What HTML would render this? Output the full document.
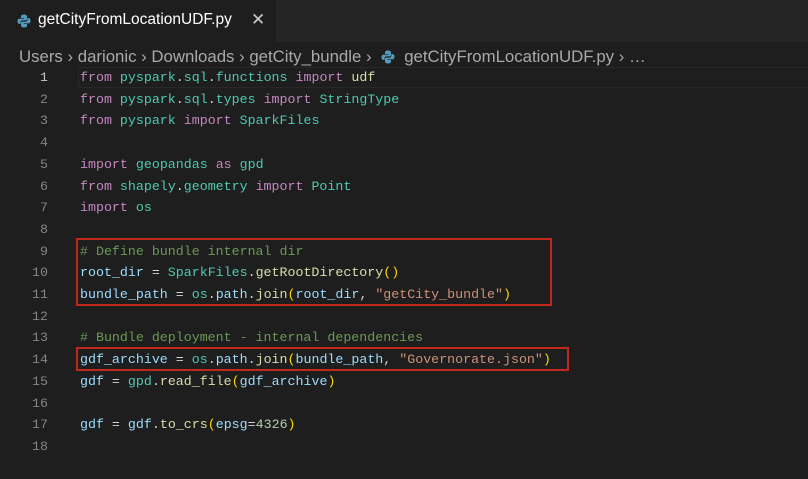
<!DOCTYPE html>
<html><head><style>
body{margin:0;width:808px;height:456px;background:#1e1e1e;overflow:hidden;position:relative;font-family:"Liberation Sans",sans-serif}
.tabbar{position:absolute;left:0;top:0;width:808px;height:42px;background:#252526}
.tab{position:absolute;left:0;top:0;width:276px;height:42px;background:#1e1e1e}
.tab .t{position:absolute;left:38px;top:11px;font-size:15.5px;color:#fff}
.tab .x{position:absolute;left:251px;top:10px;font-size:17px;color:#ccc}
.bc{position:absolute;left:19px;top:47px;font-size:16.8px;color:#a9a9a9;white-space:pre}
.py{display:inline-block;vertical-align:-2px}
.code{position:absolute;left:0;top:67px;font-family:"Liberation Mono",monospace;font-size:13.3px;line-height:21.7px;white-space:pre}
.ln{position:absolute;left:0;width:48px;text-align:right;color:#858585}
.ln.a{color:#c6c6c6}
.l{position:absolute;left:80px;color:#d4d4d4}
.cur{position:absolute;left:78px;top:67px;width:740px;height:21px;border:1px solid #282828;box-sizing:border-box}
.k{color:#c586c0}.m{color:#4ec9b0}.f{color:#dcdcaa}.v{color:#9cdcfe}.s{color:#ce9178}.c{color:#6a9955}.n{color:#b5cea8}.p{color:#ffd700}
.box{position:absolute;border:2px solid #c0281c;box-sizing:border-box}
</style></head><body>
<div class="tabbar"><div class="tab">
<svg style="position:absolute;left:17px;top:14px" width="14" height="14" viewBox="0 0 14 14"><path d="M7 0.5C4 0.5 4 1.8 4 2.5V4H7.2V4.6H2.6C1.2 4.6 0.5 5.8 0.5 7.3S1.2 10 2.6 10H3.6V8.3C3.6 7.2 4.5 6.4 5.6 6.4H8.6C9.4 6.4 10 5.8 10 5V2.5C10 1.5 9 0.5 7 0.5Z" fill="#519aba"/><path d="M7 13.5C10 13.5 10 12.2 10 11.5V10H6.8V9.4H11.4C12.8 9.4 13.5 8.2 13.5 6.7S12.8 4 11.4 4H10.4V5.7C10.4 6.8 9.5 7.6 8.4 7.6H5.4C4.6 7.6 4 8.2 4 9V11.5C4 12.5 5 13.5 7 13.5Z" fill="#519aba"/></svg>
<span class="t">getCityFromLocationUDF.py</span><span class="x">✕</span></div></div>
<div class="bc">Users › darionic › Downloads › getCity_bundle ›  <svg class="py" width="14" height="14" viewBox="0 0 14 14"><path d="M7 0.5C4 0.5 4 1.8 4 2.5V4H7.2V4.6H2.6C1.2 4.6 0.5 5.8 0.5 7.3S1.2 10 2.6 10H3.6V8.3C3.6 7.2 4.5 6.4 5.6 6.4H8.6C9.4 6.4 10 5.8 10 5V2.5C10 1.5 9 0.5 7 0.5Z" fill="#519aba"/><path d="M7 13.5C10 13.5 10 12.2 10 11.5V10H6.8V9.4H11.4C12.8 9.4 13.5 8.2 13.5 6.7S12.8 4 11.4 4H10.4V5.7C10.4 6.8 9.5 7.6 8.4 7.6H5.4C4.6 7.6 4 8.2 4 9V11.5C4 12.5 5 13.5 7 13.5Z" fill="#519aba"/></svg>  getCityFromLocationUDF.py › …</div>
<div class="cur"></div>
<div class="code">
<div class="ln a" style="top:0">1</div><div class="l" style="top:0"><span class="k">from</span> <span class="m">pyspark</span>.<span class="m">sql</span>.<span class="m">functions</span> <span class="k">import</span> <span class="f">udf</span></div>
<div class="ln" style="top:21.7px">2</div><div class="l" style="top:21.7px"><span class="k">from</span> <span class="m">pyspark</span>.<span class="m">sql</span>.<span class="m">types</span> <span class="k">import</span> <span class="m">StringType</span></div>
<div class="ln" style="top:43.4px">3</div><div class="l" style="top:43.4px"><span class="k">from</span> <span class="m">pyspark</span> <span class="k">import</span> <span class="m">SparkFiles</span></div>
<div class="ln" style="top:65.1px">4</div>
<div class="ln" style="top:86.8px">5</div><div class="l" style="top:86.8px"><span class="k">import</span> <span class="m">geopandas</span> <span class="k">as</span> <span class="m">gpd</span></div>
<div class="ln" style="top:108.5px">6</div><div class="l" style="top:108.5px"><span class="k">from</span> <span class="m">shapely</span>.<span class="m">geometry</span> <span class="k">import</span> <span class="m">Point</span></div>
<div class="ln" style="top:130.2px">7</div><div class="l" style="top:130.2px"><span class="k">import</span> <span class="m">os</span></div>
<div class="ln" style="top:151.9px">8</div>
<div class="ln" style="top:173.6px">9</div><div class="l" style="top:173.6px"><span class="c"># Define bundle internal dir</span></div>
<div class="ln" style="top:195.3px">10</div><div class="l" style="top:195.3px"><span class="v">root_dir</span> = <span class="m">SparkFiles</span>.<span class="f">getRootDirectory</span><span class="p">()</span></div>
<div class="ln" style="top:217px">11</div><div class="l" style="top:217px"><span class="v">bundle_path</span> = <span class="m">os</span>.<span class="v">path</span>.<span class="f">join</span><span class="p">(</span><span class="v">root_dir</span>, <span class="s">"getCity_bundle"</span><span class="p">)</span></div>
<div class="ln" style="top:238.7px">12</div>
<div class="ln" style="top:260.4px">13</div><div class="l" style="top:260.4px"><span class="c"># Bundle deployment - internal dependencies</span></div>
<div class="ln" style="top:282.1px">14</div><div class="l" style="top:282.1px"><span class="v">gdf_archive</span> = <span class="m">os</span>.<span class="v">path</span>.<span class="f">join</span><span class="p">(</span><span class="v">bundle_path</span>, <span class="s">"Governorate.json"</span><span class="p">)</span></div>
<div class="ln" style="top:303.8px">15</div><div class="l" style="top:303.8px"><span class="v">gdf</span> = <span class="m">gpd</span>.<span class="f">read_file</span><span class="p">(</span><span class="v">gdf_archive</span><span class="p">)</span></div>
<div class="ln" style="top:325.5px">16</div>
<div class="ln" style="top:347.2px">17</div><div class="l" style="top:347.2px"><span class="v">gdf</span> = <span class="v">gdf</span>.<span class="f">to_crs</span><span class="p">(</span><span class="v">epsg</span>=<span class="n">4326</span><span class="p">)</span></div>
<div class="ln" style="top:368.9px">18</div>
</div>
<div class="box" style="left:76px;top:238px;width:476px;height:68px"></div>
<div class="box" style="left:76px;top:347px;width:493px;height:24px"></div>
</body></html>
